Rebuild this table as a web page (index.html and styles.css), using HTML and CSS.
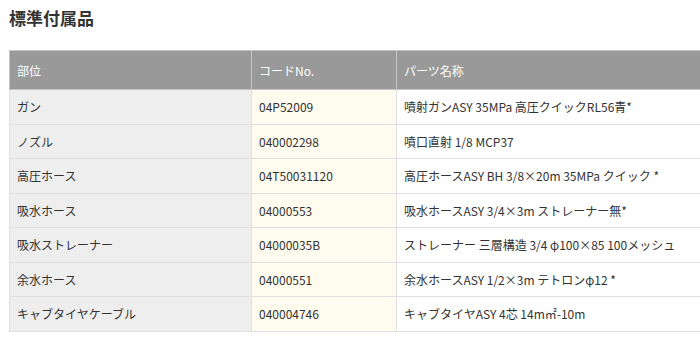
FILE: index.html
```html
<!DOCTYPE html>
<html lang="ja">
<head>
<meta charset="utf-8">
<link rel="stylesheet" href="styles.css">
</head>
<body>
<h2 class="title">標準付属品</h2>
<table class="parts">
  <thead>
    <tr><th class="c1">部位</th><th class="c2">コードNo.</th><th class="c3">パーツ名称</th></tr>
  </thead>
  <tbody>
    <tr><td class="c1">ガン</td><td class="c2">04P52009</td><td class="c3">噴射ガンASY 35MPa 高圧クイックRL56青*</td></tr>
    <tr><td class="c1">ノズル</td><td class="c2">040002298</td><td class="c3">噴口直射 1/8 MCP37</td></tr>
    <tr><td class="c1">高圧ホース</td><td class="c2">04T50031120</td><td class="c3">高圧ホースASY BH 3/8×20m 35MPa クイック *</td></tr>
    <tr><td class="c1">吸水ホース</td><td class="c2">04000553</td><td class="c3">吸水ホースASY 3/4×3m ストレーナー無*</td></tr>
    <tr><td class="c1">吸水ストレーナー</td><td class="c2">04000035B</td><td class="c3">ストレーナー 三層構造 3/4 φ100×85 100メッシュ</td></tr>
    <tr><td class="c1">余水ホース</td><td class="c2">04000551</td><td class="c3">余水ホースASY 1/2×3m テトロンφ12 *</td></tr>
    <tr><td class="c1">キャブタイヤケーブル</td><td class="c2">040004746</td><td class="c3">キャブタイヤASY 4芯 14m㎡-10m</td></tr>
  </tbody>
</table>
</body>
</html>
```
FILE: styles.css
```css
html, body {
  margin: 0;
  padding: 0;
  background: #fff;
  overflow: hidden;
}
body {
  padding: 0 0 0 9px;
  font-family: "Noto Sans CJK JP", "Noto Sans", sans-serif;
  color: #333;
}
.title {
  margin: 0;
  padding-top: 6px;
  height: 50px;
  box-sizing: border-box;
  font-size: 17px;
  font-weight: bold;
  line-height: 24px;
  color: #333;
}
.parts {
  border-collapse: collapse;
  width: 730px;
  table-layout: fixed;
  font-size: 12px;
}
.parts th, .parts td {
  text-align: left;
  padding: 0 7px;
  border: 1px solid #e0e0e0;
  white-space: nowrap;
}
.parts th {
  background: #999;
  color: #fff;
  font-weight: normal;
  height: 38px;
  border-color: #c4c4c4;
}
.parts td {
  height: 33.5px;
  color: #333;
}
.c1 { width: 227px; }
.c2 { width: 130px; }
td.c1 { background: #eeeeee; }
td.c2 { background: #fffcef; }
td.c3 { background: #fff; }
```
